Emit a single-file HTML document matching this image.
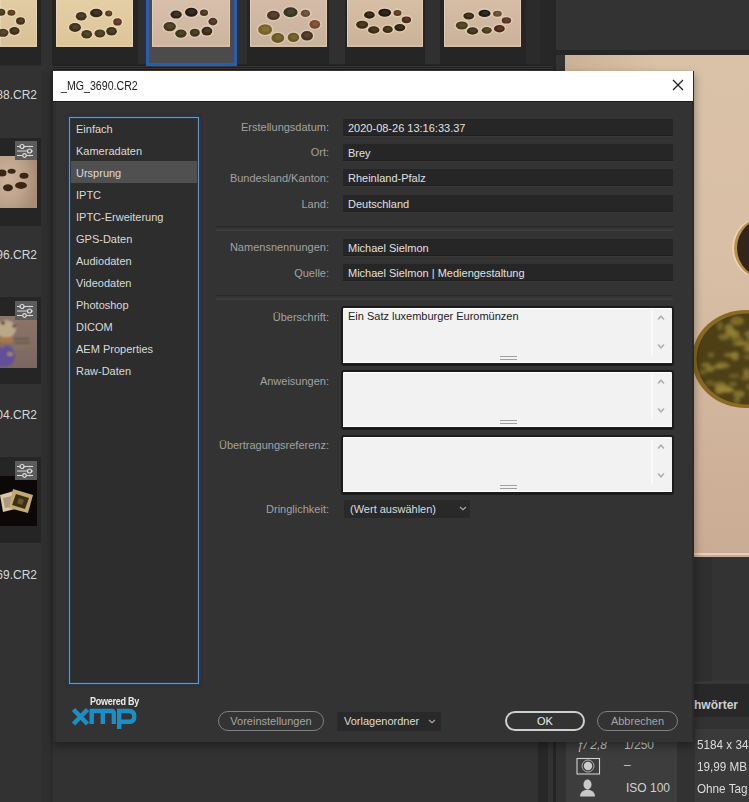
<!DOCTYPE html>
<html><head><meta charset="utf-8">
<style>
*{margin:0;padding:0;box-sizing:border-box}
html,body{width:749px;height:802px;overflow:hidden;background:#323232;font-family:"Liberation Sans",sans-serif;}
.a{position:absolute}
.cell{position:absolute;background:#252525}
.lbl{position:absolute;color:#a2a2a2;font-size:11px;text-align:right;width:200px;white-space:nowrap;left:129px}
.fld{position:absolute;background:#262626;left:343px;width:330px;height:17px;color:#e0e0e0;font-size:11px;padding-left:5px;line-height:19px;white-space:nowrap;border-bottom:1px solid #1f1f1f;box-shadow:0 1px 0 #393939}
.ta{position:absolute;background:#f2f2f2;left:341px;width:333px;border:2px solid #1c1c1c;border-bottom-width:3px;border-radius:3px;color:#222;font-size:11px;box-shadow:inset 0 1px 0 #fff, inset 0 -1px 0 #fff}
.ta .sb{position:absolute;right:19px;top:3px;width:2px;height:44px;background:#fafafa}
.ta .up,.ta .dn{position:absolute;right:7px;width:8px;height:5px}
.ta .rh{position:absolute;left:157px;width:17px;height:1px;background:#a0a0a0}
.li{position:absolute;left:76px;color:#dadada;font-size:11px;white-space:nowrap}
.btn{position:absolute;border:1.5px solid #808080;border-radius:10px;color:#a4a4a4;font-size:11px;text-align:center;line-height:18px;height:20px}
.cr{position:absolute;color:#d8d8d8;font-size:12px;white-space:nowrap;text-align:right;width:60px;left:-23px}
.icn{position:absolute;left:14px;width:23px;height:19px;background:#595959}
</style></head><body>

<!-- left column structure -->
<div class="a" style="left:41px;top:64px;width:12px;height:738px;background:#2f2f2f"></div><div class="a" style="left:50px;top:64px;width:3px;height:738px;background:#2c2c2c"></div>

<!-- top thumbnail strip -->
<svg width="0" height="0" style="position:absolute"><defs><filter id="bl" x="-20%" y="-20%" width="140%" height="140%"><feGaussianBlur stdDeviation="0.7"/></filter><filter id="bl2" x="-20%" y="-20%" width="140%" height="140%"><feGaussianBlur stdDeviation="1.2"/></filter><filter id="bl3" x="-20%" y="-20%" width="140%" height="140%"><feGaussianBlur stdDeviation="1.8"/></filter></defs></svg>
<div class="a" style="left:0;top:64px;width:565px;height:1px;background:#282828"></div><div class="a" style="left:0;top:65px;width:565px;height:1px;background:#1e1e1e"></div><div class="a" style="left:0;top:66px;width:565px;height:1px;background:#3a3a3a"></div><div class="a" style="left:0;top:67px;width:565px;height:1px;background:#202020"></div><div class="a" style="left:0;top:68px;width:565px;height:1px;background:#363636"></div><div class="a" style="left:0;top:69px;width:565px;height:1px;background:#1e1e1e"></div><div class="a" style="left:0;top:70px;width:565px;height:1px;background:#363636"></div>
<div class="a" style="left:0;top:64px;width:53px;height:7px;background:#323232"></div><div class="a" style="left:0;top:64px;width:41px;height:2px;background:#2c2c2c"></div>
<div class="a" style="left:41px;top:0;width:11px;height:64px;background:#303030"></div>
<div class="cell" style="left:0;top:0;width:41px;height:65px"></div>
<div class="cell" style="left:52px;top:0;width:86px;height:65px"></div>
<div class="a" style="left:138px;top:0;width:8px;height:64px;background:#2e2e2e"></div>
<div class="a" style="left:146px;top:0;width:91px;height:66px;background:#2a5cb0"></div>
<div class="a" style="left:149px;top:0;width:85px;height:63px;background:#4b4b4b"></div>
<div class="a" style="left:237px;top:0;width:10px;height:64px;background:#2e2e2e"></div>
<div class="cell" style="left:247px;top:0;width:82px;height:65px"></div>
<div class="a" style="left:329px;top:0;width:16px;height:64px;background:#303030"></div>
<div class="cell" style="left:345px;top:0;width:80px;height:65px"></div>
<div class="a" style="left:425px;top:0;width:15px;height:64px;background:#303030"></div>
<div class="cell" style="left:440px;top:0;width:86px;height:65px"></div>
<svg class="a" style="left:0px;top:0" width="37" height="47"><defs><linearGradient id="g1" x1="0" y1="0" x2="0" y2="1"><stop offset="0" stop-color="#e2cca2"/><stop offset="1" stop-color="#d8c098"/></linearGradient></defs><rect width="37" height="47" fill="url(#g1)"/><rect x="0.5" y="-1" width="36" height="47" fill="none" stroke="#efe2cc" stroke-opacity="0.45"/><g filter="url(#bl)"><ellipse cx="0.9" cy="12.2" rx="6.0" ry="4.9" fill="#f6ead6" opacity="0.35"/><ellipse cx="0.9" cy="12.2" rx="4.4" ry="3.5" fill="#4a3418"/><ellipse cx="1.4" cy="11.7" rx="2.4" ry="1.8" fill="#ffffff" opacity="0.08"/><ellipse cx="11.4" cy="12.7" rx="5.6" ry="4.4" fill="#f6ead6" opacity="0.35"/><ellipse cx="11.4" cy="12.7" rx="4" ry="3" fill="#5a3a1c"/><ellipse cx="11.9" cy="12.2" rx="2.2" ry="1.5" fill="#ffffff" opacity="0.08"/><ellipse cx="20.5" cy="21" rx="6.1" ry="5.1" fill="#f6ead6" opacity="0.35"/><ellipse cx="20.5" cy="21" rx="4.5" ry="3.7" fill="#4a2e18"/><ellipse cx="21.0" cy="20.5" rx="2.5" ry="1.9" fill="#ffffff" opacity="0.08"/><ellipse cx="14.4" cy="31" rx="6.8" ry="5.3" fill="#f6ead6" opacity="0.35"/><ellipse cx="14.4" cy="31" rx="5.2" ry="3.9" fill="#3e2e14"/><ellipse cx="14.9" cy="30.5" rx="2.9" ry="1.9" fill="#ffffff" opacity="0.08"/><ellipse cx="3" cy="32.8" rx="7.1" ry="5.4" fill="#f6ead6" opacity="0.35"/><ellipse cx="3" cy="32.8" rx="5.5" ry="4" fill="#4a3a1c"/><ellipse cx="3.5" cy="32.3" rx="3.0" ry="2.0" fill="#ffffff" opacity="0.08"/></g></svg>
<svg class="a" style="left:56px;top:0" width="77" height="47"><defs><linearGradient id="g2" x1="0" y1="0" x2="0" y2="1"><stop offset="0" stop-color="#e4cfa4"/><stop offset="1" stop-color="#dcc498"/></linearGradient></defs><rect width="77" height="47" fill="url(#g2)"/><rect x="0.5" y="-1" width="76" height="47" fill="none" stroke="#efe2cc" stroke-opacity="0.45"/><g filter="url(#bl)"><ellipse cx="25.2" cy="16.2" rx="7.0" ry="5.7" fill="#f6ead6" opacity="0.35"/><ellipse cx="25.2" cy="16.2" rx="5.4" ry="4.3" fill="#3e321c"/><ellipse cx="25.7" cy="15.7" rx="3.0" ry="2.1" fill="#ffffff" opacity="0.08"/><ellipse cx="40.3" cy="13" rx="7.9" ry="5.7" fill="#f6ead6" opacity="0.35"/><ellipse cx="40.3" cy="13" rx="6.3" ry="4.3" fill="#34281a"/><ellipse cx="40.8" cy="12.5" rx="3.5" ry="2.1" fill="#ffffff" opacity="0.08"/><ellipse cx="52.7" cy="13.6" rx="5.2" ry="4.4" fill="#f6ead6" opacity="0.35"/><ellipse cx="52.7" cy="13.6" rx="3.6" ry="3" fill="#5a3e22"/><ellipse cx="53.2" cy="13.1" rx="2.0" ry="1.5" fill="#ffffff" opacity="0.08"/><ellipse cx="61.5" cy="21.9" rx="5.9" ry="5.0" fill="#f6ead6" opacity="0.35"/><ellipse cx="61.5" cy="21.9" rx="4.3" ry="3.6" fill="#5a3622"/><ellipse cx="62.0" cy="21.4" rx="2.4" ry="1.8" fill="#ffffff" opacity="0.08"/><ellipse cx="55.5" cy="31.3" rx="7.0" ry="5.7" fill="#f6ead6" opacity="0.35"/><ellipse cx="55.5" cy="31.3" rx="5.4" ry="4.3" fill="#3e301a"/><ellipse cx="56.0" cy="30.8" rx="3.0" ry="2.1" fill="#ffffff" opacity="0.08"/><ellipse cx="43.9" cy="33.4" rx="7.0" ry="5.4" fill="#f6ead6" opacity="0.35"/><ellipse cx="43.9" cy="33.4" rx="5.4" ry="4" fill="#44381a"/><ellipse cx="44.4" cy="32.9" rx="3.0" ry="2.0" fill="#ffffff" opacity="0.08"/><ellipse cx="30.7" cy="34.3" rx="7.0" ry="5.7" fill="#f6ead6" opacity="0.35"/><ellipse cx="30.7" cy="34.3" rx="5.4" ry="4.3" fill="#44381a"/><ellipse cx="31.2" cy="33.8" rx="3.0" ry="2.1" fill="#ffffff" opacity="0.08"/><ellipse cx="19" cy="27.4" rx="7.6" ry="5.9" fill="#f6ead6" opacity="0.35"/><ellipse cx="19" cy="27.4" rx="6" ry="4.5" fill="#3e321c"/><ellipse cx="19.5" cy="26.9" rx="3.3" ry="2.2" fill="#ffffff" opacity="0.08"/></g></svg>
<svg class="a" style="left:152px;top:0" width="78" height="47"><defs><linearGradient id="g3" x1="0" y1="0" x2="0" y2="1"><stop offset="0" stop-color="#d8bfac"/><stop offset="1" stop-color="#cdb49e"/></linearGradient></defs><rect width="78" height="47" fill="url(#g3)"/><rect x="0.5" y="-1" width="77" height="47" fill="none" stroke="#efe2cc" stroke-opacity="0.45"/><g filter="url(#bl)"><ellipse cx="24.1" cy="14.6" rx="7.3" ry="5.4" fill="#f6ead6" opacity="0.35"/><ellipse cx="24.1" cy="14.6" rx="5.7" ry="4" fill="#34241a"/><ellipse cx="24.6" cy="14.1" rx="3.1" ry="2.0" fill="#ffffff" opacity="0.08"/><ellipse cx="39.3" cy="12.3" rx="7.9" ry="5.9" fill="#f6ead6" opacity="0.35"/><ellipse cx="39.3" cy="12.3" rx="6.3" ry="4.5" fill="#261e16"/><ellipse cx="39.8" cy="11.8" rx="3.5" ry="2.2" fill="#ffffff" opacity="0.08"/><ellipse cx="52" cy="12.7" rx="5.6" ry="4.6" fill="#f6ead6" opacity="0.35"/><ellipse cx="52" cy="12.7" rx="4" ry="3.2" fill="#4a3220"/><ellipse cx="52.5" cy="12.2" rx="2.2" ry="1.6" fill="#ffffff" opacity="0.08"/><ellipse cx="60.9" cy="21.6" rx="6.1" ry="5.2" fill="#f6ead6" opacity="0.35"/><ellipse cx="60.9" cy="21.6" rx="4.5" ry="3.8" fill="#4a3020"/><ellipse cx="61.4" cy="21.1" rx="2.5" ry="1.9" fill="#ffffff" opacity="0.08"/><ellipse cx="54.9" cy="31.1" rx="7.0" ry="5.8" fill="#f6ead6" opacity="0.35"/><ellipse cx="54.9" cy="31.1" rx="5.4" ry="4.4" fill="#3a2a1a"/><ellipse cx="55.4" cy="30.6" rx="3.0" ry="2.2" fill="#ffffff" opacity="0.08"/><ellipse cx="42.8" cy="32.7" rx="6.6" ry="5.4" fill="#f6ead6" opacity="0.35"/><ellipse cx="42.8" cy="32.7" rx="5" ry="4" fill="#3e341a"/><ellipse cx="43.3" cy="32.2" rx="2.8" ry="2.0" fill="#ffffff" opacity="0.08"/><ellipse cx="28.9" cy="33.6" rx="7.3" ry="5.6" fill="#f6ead6" opacity="0.35"/><ellipse cx="28.9" cy="33.6" rx="5.7" ry="4.2" fill="#3e341a"/><ellipse cx="29.4" cy="33.1" rx="3.1" ry="2.1" fill="#ffffff" opacity="0.08"/><ellipse cx="17.7" cy="26.6" rx="7.8" ry="6.1" fill="#f6ead6" opacity="0.35"/><ellipse cx="17.7" cy="26.6" rx="6.2" ry="4.7" fill="#44381c"/><ellipse cx="18.2" cy="26.1" rx="3.4" ry="2.4" fill="#ffffff" opacity="0.08"/></g></svg>
<svg class="a" style="left:250px;top:0" width="77" height="47"><defs><linearGradient id="g4" x1="0" y1="0" x2="0" y2="1"><stop offset="0" stop-color="#d4bba8"/><stop offset="1" stop-color="#c8b29c"/></linearGradient></defs><rect width="77" height="47" fill="url(#g4)"/><rect x="0.5" y="-1" width="76" height="47" fill="none" stroke="#efe2cc" stroke-opacity="0.45"/><g filter="url(#bl)"><ellipse cx="23.4" cy="15.4" rx="8.0" ry="6.1" fill="#f6ead6" opacity="0.35"/><ellipse cx="23.4" cy="15.4" rx="6.4" ry="4.7" fill="#4a3420"/><ellipse cx="23.9" cy="14.9" rx="3.5" ry="2.4" fill="#ffffff" opacity="0.08"/><ellipse cx="40.5" cy="12.3" rx="8.6" ry="6.4" fill="#f6ead6" opacity="0.35"/><ellipse cx="40.5" cy="12.3" rx="7" ry="5" fill="#3a3420"/><ellipse cx="41.0" cy="11.8" rx="3.9" ry="2.5" fill="#ffffff" opacity="0.08"/><ellipse cx="55.4" cy="13.4" rx="6.3" ry="5.1" fill="#f6ead6" opacity="0.35"/><ellipse cx="55.4" cy="13.4" rx="4.7" ry="3.7" fill="#6a4a30"/><ellipse cx="55.9" cy="12.9" rx="2.6" ry="1.9" fill="#ffffff" opacity="0.08"/><ellipse cx="64.8" cy="24.3" rx="7.0" ry="5.8" fill="#f6ead6" opacity="0.35"/><ellipse cx="64.8" cy="24.3" rx="5.4" ry="4.4" fill="#7a4a2a"/><ellipse cx="65.3" cy="23.8" rx="3.0" ry="2.2" fill="#ffffff" opacity="0.08"/><ellipse cx="57" cy="35.8" rx="7.6" ry="6.2" fill="#f6ead6" opacity="0.35"/><ellipse cx="57" cy="35.8" rx="6" ry="4.8" fill="#4a3020"/><ellipse cx="57.5" cy="35.3" rx="3.3" ry="2.4" fill="#ffffff" opacity="0.08"/><ellipse cx="43.4" cy="37.4" rx="7.3" ry="6.1" fill="#f6ead6" opacity="0.35"/><ellipse cx="43.4" cy="37.4" rx="5.7" ry="4.7" fill="#6a5a20"/><ellipse cx="43.9" cy="36.9" rx="3.1" ry="2.4" fill="#ffffff" opacity="0.08"/><ellipse cx="27.8" cy="38" rx="8.0" ry="6.4" fill="#f6ead6" opacity="0.35"/><ellipse cx="27.8" cy="38" rx="6.4" ry="5" fill="#6a5a20"/><ellipse cx="28.3" cy="37.5" rx="3.5" ry="2.5" fill="#ffffff" opacity="0.08"/><ellipse cx="15.1" cy="29.6" rx="8.6" ry="6.7" fill="#f6ead6" opacity="0.35"/><ellipse cx="15.1" cy="29.6" rx="7" ry="5.3" fill="#7a6426"/><ellipse cx="15.6" cy="29.1" rx="3.9" ry="2.6" fill="#ffffff" opacity="0.08"/></g></svg>
<svg class="a" style="left:347px;top:0" width="76" height="47"><defs><linearGradient id="g5" x1="0" y1="0" x2="0" y2="1"><stop offset="0" stop-color="#d6bfa4"/><stop offset="1" stop-color="#cab298"/></linearGradient></defs><rect width="76" height="47" fill="url(#g5)"/><rect x="0.5" y="-1" width="75" height="47" fill="none" stroke="#efe2cc" stroke-opacity="0.45"/><g filter="url(#bl)"><ellipse cx="22.4" cy="15" rx="7.0" ry="5.1" fill="#f6ead6" opacity="0.35"/><ellipse cx="22.4" cy="15" rx="5.4" ry="3.7" fill="#2e2010"/><ellipse cx="22.9" cy="14.5" rx="3.0" ry="1.9" fill="#ffffff" opacity="0.08"/><ellipse cx="37.7" cy="12.7" rx="8.0" ry="5.4" fill="#f6ead6" opacity="0.35"/><ellipse cx="37.7" cy="12.7" rx="6.4" ry="4" fill="#221a10"/><ellipse cx="38.2" cy="12.2" rx="3.5" ry="2.0" fill="#ffffff" opacity="0.08"/><ellipse cx="50.5" cy="13" rx="5.6" ry="4.4" fill="#f6ead6" opacity="0.35"/><ellipse cx="50.5" cy="13" rx="4" ry="3" fill="#5a3a1a"/><ellipse cx="51.0" cy="12.5" rx="2.2" ry="1.5" fill="#ffffff" opacity="0.08"/><ellipse cx="59.4" cy="19.8" rx="6.3" ry="4.8" fill="#f6ead6" opacity="0.35"/><ellipse cx="59.4" cy="19.8" rx="4.7" ry="3.4" fill="#4a2e18"/><ellipse cx="59.9" cy="19.3" rx="2.6" ry="1.7" fill="#ffffff" opacity="0.08"/><ellipse cx="52.8" cy="27.6" rx="7.0" ry="5.1" fill="#f6ead6" opacity="0.35"/><ellipse cx="52.8" cy="27.6" rx="5.4" ry="3.7" fill="#2e2010"/><ellipse cx="53.3" cy="27.1" rx="3.0" ry="1.9" fill="#ffffff" opacity="0.08"/><ellipse cx="40.7" cy="29.4" rx="6.6" ry="5.1" fill="#f6ead6" opacity="0.35"/><ellipse cx="40.7" cy="29.4" rx="5" ry="3.7" fill="#3a2e14"/><ellipse cx="41.2" cy="28.9" rx="2.8" ry="1.9" fill="#ffffff" opacity="0.08"/><ellipse cx="26.7" cy="30" rx="7.3" ry="5.1" fill="#f6ead6" opacity="0.35"/><ellipse cx="26.7" cy="30" rx="5.7" ry="3.7" fill="#3a2a12"/><ellipse cx="27.2" cy="29.5" rx="3.1" ry="1.9" fill="#ffffff" opacity="0.08"/><ellipse cx="15.1" cy="24.7" rx="7.6" ry="5.4" fill="#f6ead6" opacity="0.35"/><ellipse cx="15.1" cy="24.7" rx="6" ry="4" fill="#3a2e12"/><ellipse cx="15.6" cy="24.2" rx="3.3" ry="2.0" fill="#ffffff" opacity="0.08"/></g></svg>
<svg class="a" style="left:444px;top:0" width="77" height="47"><defs><linearGradient id="g6" x1="0" y1="0" x2="0" y2="1"><stop offset="0" stop-color="#d6bea6"/><stop offset="1" stop-color="#cab29a"/></linearGradient></defs><rect width="77" height="47" fill="url(#g6)"/><rect x="0.5" y="-1" width="76" height="47" fill="none" stroke="#efe2cc" stroke-opacity="0.45"/><g filter="url(#bl)"><ellipse cx="24.7" cy="16" rx="7.0" ry="4.8" fill="#f6ead6" opacity="0.35"/><ellipse cx="24.7" cy="16" rx="5.4" ry="3.4" fill="#3a2814"/><ellipse cx="25.2" cy="15.5" rx="3.0" ry="1.7" fill="#ffffff" opacity="0.08"/><ellipse cx="40.5" cy="13.4" rx="7.6" ry="5.1" fill="#f6ead6" opacity="0.35"/><ellipse cx="40.5" cy="13.4" rx="6" ry="3.7" fill="#1e1a14"/><ellipse cx="41.0" cy="12.9" rx="3.3" ry="1.9" fill="#ffffff" opacity="0.08"/><ellipse cx="53.4" cy="13.8" rx="6.0" ry="4.4" fill="#f6ead6" opacity="0.35"/><ellipse cx="53.4" cy="13.8" rx="4.4" ry="3" fill="#6a4a30"/><ellipse cx="53.9" cy="13.3" rx="2.4" ry="1.5" fill="#ffffff" opacity="0.08"/><ellipse cx="62.4" cy="20.4" rx="6.3" ry="4.6" fill="#f6ead6" opacity="0.35"/><ellipse cx="62.4" cy="20.4" rx="4.7" ry="3.2" fill="#5a3424"/><ellipse cx="62.9" cy="19.9" rx="2.6" ry="1.6" fill="#ffffff" opacity="0.08"/><ellipse cx="55.4" cy="28.7" rx="7.0" ry="5.1" fill="#f6ead6" opacity="0.35"/><ellipse cx="55.4" cy="28.7" rx="5.4" ry="3.7" fill="#4a2818"/><ellipse cx="55.9" cy="28.2" rx="3.0" ry="1.9" fill="#ffffff" opacity="0.08"/><ellipse cx="42.7" cy="30.3" rx="6.6" ry="4.8" fill="#f6ead6" opacity="0.35"/><ellipse cx="42.7" cy="30.3" rx="5" ry="3.4" fill="#4a3c18"/><ellipse cx="43.2" cy="29.8" rx="2.8" ry="1.7" fill="#ffffff" opacity="0.08"/><ellipse cx="28.5" cy="31" rx="7.3" ry="5.1" fill="#f6ead6" opacity="0.35"/><ellipse cx="28.5" cy="31" rx="5.7" ry="3.7" fill="#3a2e16"/><ellipse cx="29.0" cy="30.5" rx="3.1" ry="1.9" fill="#ffffff" opacity="0.08"/><ellipse cx="17.8" cy="25.4" rx="7.6" ry="5.4" fill="#f6ead6" opacity="0.35"/><ellipse cx="17.8" cy="25.4" rx="6" ry="4" fill="#4a3c1a"/><ellipse cx="18.3" cy="24.9" rx="3.3" ry="2.0" fill="#ffffff" opacity="0.08"/></g></svg>
<div class="a" style="left:526px;top:0;width:14px;height:64px;background:#2b2b2b"></div>
<div class="a" style="left:540px;top:0;width:14px;height:64px;background:#272727"></div>
<div class="a" style="left:553px;top:0;width:3px;height:802px;background:#252525"></div>
<div class="a" style="left:538px;top:720px;width:10px;height:82px;background:#282828"></div>
<div class="a" style="left:556px;top:0;width:193px;height:557px;background:#333333"></div>
<div class="a" style="left:556px;top:50px;width:193px;height:5px;background:#262626"></div>

<!-- left column cells -->
<div class="cr" style="top:88px">88.CR2</div>
<div class="cell" style="left:0;top:138px;width:41px;height:88px"></div>
<svg class="a" style="left:0;top:156px" width="37" height="52"><defs><radialGradient id="la" cx="0.2" cy="0.45" r="0.8"><stop offset="0" stop-color="#cdb59c"/><stop offset="0.6" stop-color="#bca28a"/><stop offset="1" stop-color="#a88c76"/></radialGradient></defs><rect width="37" height="52" fill="url(#la)"/>
<g fill="#3a2816" filter="url(#bl)"><ellipse cx="2" cy="17" rx="4.5" ry="3.5"/><ellipse cx="11.6" cy="15.3" rx="4" ry="2.5"/><ellipse cx="24" cy="19.8" rx="4.5" ry="3"/><ellipse cx="21" cy="29.4" rx="6" ry="3.5"/><ellipse cx="8" cy="31.8" rx="5" ry="3.5"/></g></svg>
<svg class="a" style="left:15px;top:141px" width="22" height="19"><rect width="22" height="19" fill="#5c5c5c"/><g stroke="#dedede" stroke-width="1.2" fill="#5c5c5c"><path d="M2 5.5H18M2 10H18M2 14.5H18"/><circle cx="7" cy="5.5" r="2"/><circle cx="14.5" cy="10" r="2"/><circle cx="9.5" cy="14.5" r="1.8"/></g></svg>
<div class="cr" style="top:248px">96.CR2</div>
<div class="cell" style="left:0;top:297px;width:41px;height:87px"></div>
<svg class="a" style="left:0;top:316px" width="37" height="52"><defs><linearGradient id="lb" x1="0" y1="0" x2="0" y2="1"><stop offset="0" stop-color="#8c746a"/><stop offset="1" stop-color="#7c6660"/></linearGradient></defs><rect width="37" height="52" fill="url(#lb)"/>
<g filter="url(#bl2)"><ellipse cx="4" cy="40" rx="11" ry="11" fill="#62509a"/><ellipse cx="6" cy="13" rx="10" ry="9" fill="#bca888"/><ellipse cx="7" cy="24" rx="9" ry="3" fill="#a87848"/><path d="M12 20 L30 24 L32 31 L14 34Z" fill="#857260"/><path d="M14 23H29M15 27H30" stroke="#4a3a30" stroke-width="1"/><ellipse cx="3" cy="7" rx="1.8" ry="1.8" fill="#3a2020"/><ellipse cx="14" cy="10" rx="1.6" ry="1.6" fill="#3a2020"/><ellipse cx="10" cy="38" rx="3" ry="2" fill="#c0a050" opacity="0.7"/><ellipse cx="2" cy="30" rx="3" ry="2" fill="#a07040" opacity="0.6"/></g></svg>
<svg class="a" style="left:15px;top:301px" width="22" height="19"><rect width="22" height="19" fill="#5c5c5c"/><g stroke="#dedede" stroke-width="1.2" fill="#5c5c5c"><path d="M2 5.5H18M2 10H18M2 14.5H18"/><circle cx="7" cy="5.5" r="2"/><circle cx="14.5" cy="10" r="2"/><circle cx="9.5" cy="14.5" r="1.8"/></g></svg>
<div class="cr" style="top:408px">04.CR2</div>
<div class="cell" style="left:0;top:457px;width:41px;height:86px"></div>
<svg class="a" style="left:0;top:476px" width="37" height="50"><rect width="37" height="50" fill="#0c0808"/>
<g filter="url(#bl)"><path d="M0 19 L14 15 L19 32 L3 36Z" fill="#d8c8a8"/><path d="M3 22 L12 20 L15 30 L5 32Z" fill="#8a7a60" opacity="0.6"/><path d="M13 13 L33 19 L28 37 L9 32Z" fill="#c2aa72"/><path d="M16 18 L29 22 L25 33 L12 29Z" fill="#3e2e16"/><path d="M19 22 L24 24 L22 29 L17 27Z" fill="#8a7040" opacity="0.6"/></g></svg>
<svg class="a" style="left:15px;top:461px" width="22" height="19"><rect width="22" height="19" fill="#5c5c5c"/><g stroke="#dedede" stroke-width="1.2" fill="#5c5c5c"><path d="M2 5.5H18M2 10H18M2 14.5H18"/><circle cx="7" cy="5.5" r="2"/><circle cx="14.5" cy="10" r="2"/><circle cx="9.5" cy="14.5" r="1.8"/></g></svg>
<div class="cr" style="top:568px">69.CR2</div>

<!-- preview -->
<svg class="a" style="left:565px;top:55px" width="184" height="503"><defs>
<linearGradient id="pg" x1="0" y1="0" x2="0" y2="1"><stop offset="0" stop-color="#dac2a8"/><stop offset="0.4" stop-color="#d8bfa6"/><stop offset="1" stop-color="#caab93"/></linearGradient><linearGradient id="pg2" x1="0" y1="0" x2="1" y2="0"><stop offset="0" stop-color="#5a3a10" stop-opacity="0.12"/><stop offset="0.5" stop-color="#5a3a10" stop-opacity="0"/></linearGradient>
<radialGradient id="c2" cx="0.5" cy="0.5" r="0.5"><stop offset="0" stop-color="#5e4c1c"/><stop offset="0.88" stop-color="#4e3e16"/><stop offset="1" stop-color="#8a6a28"/></radialGradient></defs>
<rect width="184" height="502" fill="url(#pg)"/><rect width="184" height="502" fill="url(#pg2)"/><rect y="498" width="184" height="2" fill="#e4d0bc"/>
<g filter="url(#bl)">
<ellipse cx="199" cy="193" rx="32" ry="32" fill="#e8d4b0"/><ellipse cx="200" cy="193" rx="31" ry="31" fill="#b89050"/><ellipse cx="201.5" cy="193" rx="29.5" ry="30" fill="#33261a"/>
<ellipse cx="181" cy="304" rx="54" ry="49" fill="#8a6a24"/><ellipse cx="182" cy="304" rx="50.5" ry="45.5" fill="#4e4018"/>
</g><g filter="url(#bl3)"><ellipse cx="157" cy="310" rx="6.7" ry="3.2" fill="#a08a38" opacity="0.53"/><ellipse cx="165" cy="278" rx="5.0" ry="3.6" fill="#a08a38" opacity="0.63"/><ellipse cx="172" cy="266" rx="6.9" ry="4.4" fill="#a08a38" opacity="0.58"/><ellipse cx="167" cy="276" rx="3.1" ry="3.3" fill="#a08a38" opacity="0.37"/><ellipse cx="156" cy="334" rx="5.1" ry="3.6" fill="#a08a38" opacity="0.52"/><ellipse cx="170" cy="301" rx="4.1" ry="4.5" fill="#a08a38" opacity="0.70"/><ellipse cx="180" cy="323" rx="4.3" ry="2.6" fill="#a08a38" opacity="0.45"/><ellipse cx="154" cy="335" rx="4.5" ry="4.4" fill="#a08a38" opacity="0.65"/><ellipse cx="185" cy="302" rx="6.9" ry="3.0" fill="#a08a38" opacity="0.38"/><ellipse cx="168" cy="329" rx="4.1" ry="2.2" fill="#a08a38" opacity="0.47"/><ellipse cx="188" cy="327" rx="3.5" ry="2.6" fill="#a08a38" opacity="0.39"/><ellipse cx="141" cy="310" rx="4.8" ry="2.5" fill="#a08a38" opacity="0.61"/><ellipse cx="138" cy="317" rx="3.5" ry="3.1" fill="#a08a38" opacity="0.42"/><ellipse cx="178" cy="288" rx="6.5" ry="2.5" fill="#a08a38" opacity="0.49"/><ellipse cx="181" cy="317" rx="3.4" ry="4.5" fill="#a08a38" opacity="0.42"/><ellipse cx="145" cy="328" rx="4.3" ry="2.7" fill="#a08a38" opacity="0.38"/><ellipse cx="145" cy="314" rx="4.5" ry="3.1" fill="#a08a38" opacity="0.69"/><ellipse cx="159" cy="311" rx="6.5" ry="2.5" fill="#a08a38" opacity="0.40"/><ellipse cx="185" cy="332" rx="4.0" ry="2.5" fill="#a08a38" opacity="0.61"/><ellipse cx="186" cy="279" rx="6.8" ry="4.2" fill="#a08a38" opacity="0.56"/><ellipse cx="155" cy="271" rx="3.2" ry="4.4" fill="#a08a38" opacity="0.43"/><ellipse cx="172" cy="284" rx="6.3" ry="3.5" fill="#a08a38" opacity="0.45"/><ellipse cx="164" cy="335" rx="5.5" ry="2.7" fill="#a08a38" opacity="0.67"/><ellipse cx="146" cy="300" rx="3.2" ry="2.4" fill="#a08a38" opacity="0.48"/><ellipse cx="164" cy="273" rx="4.4" ry="4.2" fill="#a08a38" opacity="0.69"/><ellipse cx="169" cy="321" rx="5.3" ry="2.4" fill="#a08a38" opacity="0.36"/><ellipse cx="172" cy="345" rx="3.1" ry="3.6" fill="#a08a38" opacity="0.52"/><ellipse cx="174" cy="289" rx="7.0" ry="2.2" fill="#a08a38" opacity="0.54"/><ellipse cx="174" cy="339" rx="5.9" ry="3.8" fill="#a08a38" opacity="0.63"/><ellipse cx="185" cy="292" rx="5.7" ry="4.3" fill="#a08a38" opacity="0.65"/><ellipse cx="155" cy="330" rx="6.5" ry="3.4" fill="#a08a38" opacity="0.57"/><ellipse cx="153" cy="312" rx="5.4" ry="2.2" fill="#a08a38" opacity="0.57"/><ellipse cx="190" cy="338" rx="5.9" ry="3.0" fill="#a08a38" opacity="0.61"/><ellipse cx="165" cy="300" rx="6.4" ry="2.2" fill="#a08a38" opacity="0.61"/><ellipse cx="159" cy="282" rx="5.8" ry="3.2" fill="#a08a38" opacity="0.57"/><ellipse cx="185" cy="284" rx="3.0" ry="2.8" fill="#a08a38" opacity="0.59"/><ellipse cx="184" cy="319" rx="4.8" ry="4.2" fill="#a08a38" opacity="0.46"/><ellipse cx="170" cy="279" rx="4.7" ry="4.0" fill="#a08a38" opacity="0.67"/><ellipse cx="183" cy="295" rx="5.3" ry="2.8" fill="#a08a38" opacity="0.40"/><ellipse cx="160" cy="334" rx="6.4" ry="3.8" fill="#a08a38" opacity="0.68"/></g>
</svg>
<div class="a" style="left:556px;top:557px;width:193px;height:124px;background:#333333"></div>
<div class="a" style="left:694px;top:557px;width:18px;height:124px;background:#2f2f2f"></div>
<div class="a" style="left:556px;top:681px;width:193px;height:3px;background:#373737"></div>
<div class="a" style="left:556px;top:684px;width:193px;height:33px;background:#282828"></div>
<div class="a" style="left:556px;top:717px;width:193px;height:85px;background:#323232"></div>
<div class="a" style="left:695px;top:729px;width:54px;height:73px;background:#3a3a3a"></div>
<div class="a" style="left:694px;top:698px;font-size:12px;font-weight:bold;color:#cfcfcf">hwörter</div>
<div class="a" style="left:566px;top:720px;width:111px;height:82px;background:#3d3d3d"></div>
<div class="a" style="left:697px;top:737px;font-size:13px;color:#dcdcdc;white-space:nowrap;transform:scaleX(0.9);transform-origin:0 0">5184 x 34</div>
<div class="a" style="left:697px;top:759px;font-size:13px;color:#dcdcdc;white-space:nowrap;transform:scaleX(0.9);transform-origin:0 0">19,99 MB</div>
<div class="a" style="left:697px;top:781px;font-size:13px;color:#dcdcdc;white-space:nowrap;transform:scaleX(0.9);transform-origin:0 0">Ohne Tag</div>
<div class="a" style="left:577px;top:738px;font-size:12px;color:#c8c8c8;font-style:italic">ƒ/ 2,8</div>
<div class="a" style="left:624px;top:738px;font-size:12px;color:#c8c8c8">1/250</div>
<div class="a" style="left:624px;top:758px;font-size:12px;color:#c8c8c8">–</div>
<div class="a" style="left:626px;top:781px;font-size:12px;color:#d0d0d0">ISO 100</div>
<svg class="a" style="left:576px;top:757px" width="25" height="18"><rect x="1" y="1.5" width="22.5" height="15.5" fill="none" stroke="#cfcfcf" stroke-width="1.1"/><circle cx="12" cy="9" r="6" fill="none" stroke="#bbb" stroke-width="0.9"/><circle cx="12" cy="9" r="4.2" fill="#cccccc"/></svg>
<svg class="a" style="left:578px;top:778px" width="20" height="20"><ellipse cx="9.5" cy="6.5" rx="4" ry="5" fill="#c8c8c8"/><path d="M2 18.5 Q2.5 12 9.5 11.5 Q16.5 12 17 18.5Z" fill="#c8c8c8"/></svg>

<!-- dialog -->
<div class="a" style="left:53px;top:71px;width:641px;height:671px;background:#333333;border-left:0;border-right:2px solid #2b2b2b;border-bottom:4px solid #333333;box-shadow:0 4px 9px rgba(0,0,0,.38)"></div>
<div class="a" style="left:53px;top:71px;width:640px;height:31px;background:#ffffff;border-bottom:1px solid #1c1c1c"></div>
<div class="a" style="left:53px;top:102px;width:3px;height:640px;background:#2e2e2e"></div>
<div class="a" style="left:61px;top:79px;font-size:12px;color:#222;transform:scaleX(0.885);transform-origin:0 0">_MG_3690.CR2</div>
<svg class="a" style="left:672px;top:79px" width="12" height="12"><path d="M1 1L11 11M11 1L1 11" stroke="#222" stroke-width="1.3"/></svg>

<!-- list -->
<div class="a" style="left:65px;top:113px;width:138px;height:575px;border:2px solid #352e30;border-radius:4px"></div><div class="a" style="left:67px;top:115px;width:134px;height:571px;border:2px solid #22364c;border-radius:3px"></div>
<div class="a" style="left:69px;top:117px;width:130px;height:567px;border:1px solid #7096c2;background:#2d2d2d;box-shadow:inset 0 0 0 1px #24384c"></div>
<div class="a" style="left:71px;top:161px;width:126px;height:22px;background:#505050"></div>
<div class="li" style="top:123px">Einfach</div>
<div class="li" style="top:145px">Kameradaten</div>
<div class="li" style="top:167px">Ursprung</div>
<div class="li" style="top:189px">IPTC</div>
<div class="li" style="top:211px">IPTC-Erweiterung</div>
<div class="li" style="top:233px">GPS-Daten</div>
<div class="li" style="top:255px">Audiodaten</div>
<div class="li" style="top:277px">Videodaten</div>
<div class="li" style="top:299px">Photoshop</div>
<div class="li" style="top:321px">DICOM</div>
<div class="li" style="top:343px">AEM Properties</div>
<div class="li" style="top:365px">Raw-Daten</div>

<!-- fields -->
<div class="lbl" style="top:121px">Erstellungsdatum:</div>
<div class="fld" style="top:119px">2020-08-26 13:16:33.37</div>
<div class="lbl" style="top:146px">Ort:</div>
<div class="fld" style="top:144px">Brey</div>
<div class="lbl" style="top:172px">Bundesland/Kanton:</div>
<div class="fld" style="top:169px">Rheinland-Pfalz</div>
<div class="lbl" style="top:198px">Land:</div>
<div class="fld" style="top:195px">Deutschland</div>
<div class="a" style="left:216px;top:226px;width:457px;height:1px;background:#2a2a2a"></div>
<div class="a" style="left:216px;top:229px;width:457px;height:2px;background:#3c3c3c"></div>
<div class="lbl" style="top:241px">Namensnennungen:</div>
<div class="fld" style="top:239px">Michael Sielmon</div>
<div class="lbl" style="top:267px">Quelle:</div>
<div class="fld" style="top:264px">Michael Sielmon | Mediengestaltung</div>
<div class="a" style="left:216px;top:295px;width:457px;height:1px;background:#2a2a2a"></div>
<div class="a" style="left:216px;top:298px;width:457px;height:2px;background:#3c3c3c"></div>

<div class="lbl" style="top:311px">Überschrift:</div>
<div class="ta" style="top:306px;height:60px"><span class="a" style="left:5px;top:2px">Ein Satz luxemburger Euromünzen</span>
<div class="sb"></div>
<svg class="up" style="top:7px" viewBox="0 0 8 5"><path d="M1 4.5L4 1.2L7 4.5" fill="none" stroke="#acacac" stroke-width="1.45"/></svg>
<svg class="dn" style="top:36px" viewBox="0 0 8 5"><path d="M1 0.5L4 3.8L7 0.5" fill="none" stroke="#acacac" stroke-width="1.45"/></svg>
<div class="rh" style="top:48px"></div><div class="rh" style="top:51px"></div></div>
<div class="lbl" style="top:375px">Anweisungen:</div>
<div class="ta" style="top:370px;height:60px">
<div class="sb"></div>
<svg class="up" style="top:7px" viewBox="0 0 8 5"><path d="M1 4.5L4 1.2L7 4.5" fill="none" stroke="#acacac" stroke-width="1.45"/></svg>
<svg class="dn" style="top:36px" viewBox="0 0 8 5"><path d="M1 0.5L4 3.8L7 0.5" fill="none" stroke="#acacac" stroke-width="1.45"/></svg>
<div class="rh" style="top:48px"></div><div class="rh" style="top:51px"></div></div>
<div class="lbl" style="top:439px">Übertragungsreferenz:</div>
<div class="ta" style="top:435px;height:60px">
<div class="sb"></div>
<svg class="up" style="top:7px" viewBox="0 0 8 5"><path d="M1 4.5L4 1.2L7 4.5" fill="none" stroke="#acacac" stroke-width="1.45"/></svg>
<svg class="dn" style="top:36px" viewBox="0 0 8 5"><path d="M1 0.5L4 3.8L7 0.5" fill="none" stroke="#acacac" stroke-width="1.45"/></svg>
<div class="rh" style="top:48px"></div><div class="rh" style="top:51px"></div></div>
<div class="lbl" style="top:503px">Dringlichkeit:</div>
<div class="a" style="left:344px;top:500px;width:126px;height:18px;background:#292929;color:#dcdcdc;font-size:11px;line-height:18px;padding-left:6px">(Wert auswählen)</div>
<svg class="a" style="left:459px;top:506px" width="8" height="5"><path d="M1 1L4 3.8L7 1" fill="none" stroke="#a8a8a8" stroke-width="1.2"/></svg>

<!-- bottom -->
<div class="a" style="left:90px;top:695px;font-size:10.5px;color:#ececec;font-weight:bold;letter-spacing:-0.3px;transform:scaleX(0.86);transform-origin:0 0">Powered By</div>
<svg class="a" style="left:70px;top:705px" width="70" height="26"><g fill="#1b8ec8">
<path d="M3.5 4.5L17.5 19M17.5 4.5L3.5 19" stroke="#1b8ec8" stroke-width="4.6" fill="none"/>
<path d="M19.5 19V3.8H41.5Q46 3.8 46 8.3V19H41.6V8.2H35V19H30.6V8.2H23.9V19Z"/>
<path d="M47 24V3.8H59Q66.5 3.8 66.5 11.4Q66.5 19 59 19H51.4V24Z M51.4 8.2V14.6H58.6Q62.1 14.6 62.1 11.4Q62.1 8.2 58.6 8.2Z" fill-rule="evenodd"/>
</g></svg>
<div class="btn" style="left:218px;top:711px;width:106px">Voreinstellungen</div>
<div class="a" style="left:337px;top:712px;width:104px;height:19px;background:#292929;color:#dcdcdc;font-size:11px;line-height:19px;padding-left:7px">Vorlagenordner</div>
<svg class="a" style="left:428px;top:719px" width="8" height="5"><path d="M1 1L4 3.8L7 1" fill="none" stroke="#a8a8a8" stroke-width="1.2"/></svg>
<div class="btn" style="left:505px;top:711px;width:80px;color:#ececec;border:2px solid #cfcfcf;line-height:17px">OK</div>
<div class="btn" style="left:597px;top:711px;width:81px">Abbrechen</div>

</body></html>
